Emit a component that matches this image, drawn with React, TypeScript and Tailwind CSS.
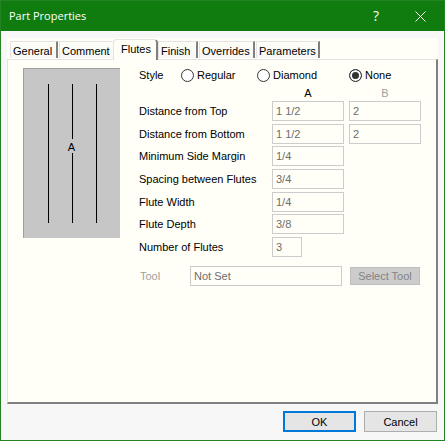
import { useState } from 'react';
import type { ReactNode } from 'react';
import clsx from 'clsx';

const tabs = [
  { name: 'General', size: 'w-12 mr-px' },
  { name: 'Comment', size: 'w-[54px]' },
  { name: 'Flutes', size: 'w-[45px]' },
  { name: 'Finish', size: 'w-10 mr-px' },
  { name: 'Overrides', size: 'w-14 mr-px' },
  { name: 'Parameters', size: 'w-16' },
];

const rows = [
  { label: 'Distance from Top', a: '1 1/2', b: '2' },
  { label: 'Distance from Bottom', a: '1 1/2', b: '2' },
  { label: 'Minimum Side Margin', a: '1/4' },
  { label: 'Spacing between Flutes', a: '3/4' },
  { label: 'Flute Width', a: '1/4' },
  { label: 'Flute Depth', a: '3/8' },
  { label: 'Number of Flutes', a: '3', short: true },
];

function Field({ id, value, label, width }: { id: string; value: string; label?: string; width: string }) {
  return (
    <input
      id={id}
      aria-label={label}
      disabled
      defaultValue={value}
      className={clsx('h-5 border border-[#cccccc] bg-transparent px-[3px] text-[#6d6d6d]', width)}
    />
  );
}

function Radio({ value, selected, onSelect, width }: { value: string; selected: string; onSelect: (v: string) => void; width: string }) {
  return (
    <label className={clsx('flex items-center gap-[3px]', width)}>
      <input
        type="radio"
        name="style"
        checked={selected === value}
        onChange={() => onSelect(value)}
        className="size-[13px] shrink-0 appearance-none rounded-full border border-[#333333] bg-white checked:bg-[#333333] checked:shadow-[inset_0_0_0_2px_#fff]"
      />
      {value}
    </label>
  );
}

function FlutePreview() {
  return (
    <svg width="97" height="170" viewBox="0 0 97 170" className="block shrink-0 bg-[#c6c6c6]" shapeRendering="crispEdges">
      <path d="M0 .5H97M.5 0V170" stroke="#a0a0a0" />
      <path d="M25.500 16V155M49.500 16V71M49.500 85V155M73.500 16V155" stroke="#000" />
      <text x="48.500" y="83" fontSize="11" textAnchor="middle">A</text>
    </svg>
  );
}

function TitleBar() {
  return (
    <header className="flex h-[30px] shrink-0 items-center bg-[#107c10] pl-2 text-white">
      <h1 className="flex-1 font-['Open_Sans',sans-serif] text-[11px] leading-4">Part Properties</h1>
      <button aria-label="Help" className="h-full w-[42px] font-['Open_Sans',sans-serif] text-[14px]">?</button>
      <button aria-label="Close" className="flex h-full w-[47px] items-center justify-center">
        <svg width="11" height="11" viewBox="0 0 11 11" stroke="currentColor">
          <path d="M.5.5l10 10M10.500.5l-10 10" />
        </svg>
      </button>
    </header>
  );
}

function DialogButton({ primary, children }: { primary?: boolean; children: ReactNode }) {
  return (
    <button
      className={clsx(
        'h-[21px] w-[73px] bg-[#e5e5e5]',
        primary ? 'border-2 border-[#0078d7]' : 'border border-[#adadad]',
      )}
    >
      {children}
    </button>
  );
}

export default function App() {
  const [tab, setTab] = useState('Flutes');
  const [style, setStyle] = useState('None');

  return (
    <div className="flex min-h-screen flex-col border border-[#238423] bg-[#f7f7f7] font-['Liberation_Sans',Arial,sans-serif] text-[11px] leading-[14px] text-black">
      <TitleBar />
      <main className="mx-1.5 mt-[7px] flex flex-1 flex-col bg-[#fffff7]">
        <div role="tablist" className="flex h-[21px] items-end pl-[3px]">
          {tabs.map(({ name, size }) => {
            const active = name === tab;
            return (
              <button
                key={name}
                role="tab"
                aria-selected={active}
                onClick={() => setTab(name)}
                className={clsx(
                  'shrink-0 border-t border-l border-[#e3e3e3] text-left whitespace-nowrap',
                  size,
                  active
                    ? 'z-10 -mb-px h-[21px] rounded-t-sm pb-[3px] pl-[7px]'
                    : 'mb-px h-[17px] pt-px pl-[2px]',
                  name !== 'Comment' && 'border-r-2 border-r-[#808080]',
                  active ? 'bg-[#fffff7]' : 'bg-linear-to-b from-[#fffff7] to-[#f7f7f7]',
                )}
              >
                {name}
              </button>
            );
          })}
        </div>
        <section
          role="tabpanel"
          className="flex flex-1 items-start gap-[19px] border-t border-r-2 border-b-2 border-l border-t-[#e3e3e3] border-r-[#808080] border-b-[#808080] border-l-[#e3e3e3] pt-2 pl-[15px]"
        >
          <FlutePreview />
          <div className="flex flex-col">
            <fieldset className="flex h-[15px] items-center">
              <span className="w-[42px]">Style</span>
              <Radio value="Regular" selected={style} onSelect={setStyle} width="w-[76px]" />
              <Radio value="Diamond" selected={style} onSelect={setStyle} width="w-[92px]" />
              <Radio value="None" selected={style} onSelect={setStyle} width="w-[60px]" />
            </fieldset>
            <div className="mt-[3px] flex h-[15px] gap-[5px] pl-[133px] text-center">
              <span className="w-[72px]">A</span>
              <span className="w-[72px] text-[#a0a0a0]">B</span>
            </div>
            <div className="flex h-[156px] flex-col justify-between">
              {rows.map(({ label, a, b, short }) => (
                <div key={label} className="flex items-center">
                  <label htmlFor={label} className="w-[133px]">{label}</label>
                  <Field id={label} value={a} width={short ? 'w-[30px]' : 'w-[72px] mr-[5px]'} />
                  {b && <Field id={label + ' B'} label={label + ' B'} value={b} width="w-[72px]" />}
                </div>
              ))}
            </div>
            <div className="mt-[9px] flex items-center">
              <label htmlFor="tool" className="w-[51px] pl-px text-[#a0a0a0]">Tool</label>
              <Field id="tool" value="Not Set" width="w-[152px] mr-2" />
              <button disabled className="h-[18px] w-[70px] border border-[#bfbfbf] bg-[#cccccc] leading-4 text-[#838383]">
                Select Tool
              </button>
            </div>
          </div>
        </section>
      </main>
      <footer className="flex justify-end gap-2 px-[7px] pt-[7px] pb-2">
        <DialogButton primary>OK</DialogButton>
        <DialogButton>Cancel</DialogButton>
      </footer>
    </div>
  );
}
